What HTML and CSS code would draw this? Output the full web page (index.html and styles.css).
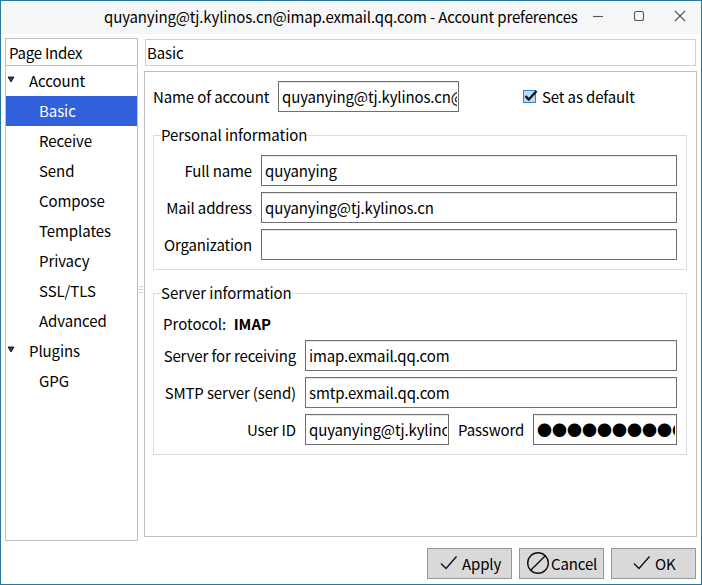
FILE: index.html
```
<!DOCTYPE html>
<html lang="en">
<head>
<meta charset="utf-8">
<title>Account preferences</title>
<link rel="stylesheet" href="styles.css">
</head>
<body>
<div class="window">
  <header class="titlebar">
    <span class="title">quyanying@tj.kylinos.cn@imap.exmail.qq.com - Account preferences</span>
    <div class="controls">
      <svg width="12" height="12" viewBox="0 0 12 12"><path d="M1 6.5h10"/></svg>
      <svg width="12" height="12" viewBox="0 0 12 12"><rect x="1.5" y="1.5" width="9" height="9" rx="2"/></svg>
      <svg width="12" height="12" viewBox="0 0 12 12"><path d="M1 1l10 10M11 1L1 11"/></svg>
    </div>
  </header>
  <div class="body">
    <nav class="sidebar">
      <div class="index-head">Page Index</div>
      <div class="row parent"><svg class="arrow" width="8" height="7" viewBox="0 0 8 7"><path d="M1 1h6L4 6z"/></svg>Account</div>
      <div class="row selected">Basic</div>
      <div class="row">Receive</div>
      <div class="row">Send</div>
      <div class="row">Compose</div>
      <div class="row">Templates</div>
      <div class="row">Privacy</div>
      <div class="row">SSL/TLS</div>
      <div class="row">Advanced</div>
      <div class="row parent"><svg class="arrow" width="8" height="7" viewBox="0 0 8 7"><path d="M1 1h6L4 6z"/></svg>Plugins</div>
      <div class="row">GPG</div>
    </nav>
    <div class="splitter"><i></i><i></i><i></i></div>
    <main class="main">
      <div class="page-head">Basic</div>
      <div class="panel">
        <div class="account">
          <label>Name of account</label>
          <div class="entry name-entry"><span>quyanying@tj.kylinos.cn@</span></div>
          <div class="default">
            <svg width="16" height="16" viewBox="0 0 16 16"><rect class="box" x="1.5" y="2.5" width="12" height="12"/><path class="tick" d="M3.500 8l3.200 3.600L14.600 3"/></svg>
            <span>Set as default</span>
          </div>
        </div>
        <section class="group personal">
          <h2>Personal information</h2>
          <div class="form">
            <label>Full name</label><div class="entry"><span>quyanying</span></div>
            <label>Mail address</label><div class="entry"><span>quyanying@tj.kylinos.cn</span></div>
            <label>Organization</label><div class="entry"></div>
          </div>
        </section>
        <section class="group server">
          <h2>Server information</h2>
          <div class="protocol">Protocol: <b>IMAP</b></div>
          <div class="form">
            <label>Server for receiving</label><div class="entry"><span>imap.exmail.qq.com</span></div>
            <label>SMTP server (send)</label><div class="entry"><span>smtp.exmail.qq.com</span></div>
            <label>User ID</label>
            <div class="login">
              <div class="entry"><span>quyanying@tj.kylino</span></div>
              <label>Password</label>
              <div class="entry"><span class="dots">●●●●●●●●●●</span></div>
            </div>
          </div>
        </section>
      </div>
    </main>
  </div>
  <footer class="actions">
    <div class="button apply"><svg width="18" height="16" viewBox="0 0 18 16"><path d="M1 8.500l5 5L16.500 1.500"/></svg>Apply</div>
    <div class="button cancel"><svg width="24" height="24" viewBox="0 0 24 24"><circle cx="12" cy="12" r="10.300"/><path d="M4.700 19.300L19.300 4.700"/></svg>Cancel</div>
    <div class="button ok"><svg width="18" height="16" viewBox="0 0 18 16"><path d="M1 8.500l5 5L16.500 1.500"/></svg>OK</div>
  </footer>
</div>
</body>
</html>
```
FILE: styles.css
```
* { box-sizing: border-box; }
body {
  margin: 0;
  font: 15px/30px "Noto Sans CJK SC", "Noto Sans", sans-serif;
  letter-spacing: -.13px;
  color: #000;
  background: #fff;
}
.window {
  width: 702px;
  height: 585px;
  border: 1px solid #28799a;
  background: #fff;
  overflow: hidden;
}
.titlebar {
  display: flex;
  height: 33px;
  padding-left: 103px;
  background: #f5f6f8;
  line-height: 32px;
  white-space: nowrap;
  letter-spacing: -.14px;
}
.title { width: 488px; }
.controls {
  display: flex;
  gap: 29px;
  padding-top: 9px;
}
.controls svg { fill: none; stroke: #555; stroke-width: 1.1; }
.body { display: flex; padding: 4px 4px 0; height: 507px; }
.sidebar {
  width: 133px;
  height: 503px;
  border: 1px solid #bfbfbf;
  letter-spacing: -.08px;
}
.index-head {
  height: 27px;
  padding-left: 3px;
  border-bottom: 1px solid #bfbfbf;
  line-height: 28px;
  letter-spacing: -.25px;
}
.row { height: 30px; padding-left: 33px; line-height: 30px; }
.row.parent { display: flex; align-items: flex-start; padding-left: 0; }
.arrow { width: 8px; margin: 10px 14px 0 1px; fill: #444; stroke: #000; stroke-width: .8; }
.row.selected { background: #3060dc; color: #fff; }
.splitter {
  display: flex;
  flex-direction: column;
  justify-content: center;
  align-items: center;
  gap: 2px;
  width: 6px;
}
.splitter i { width: 4px; height: 1px; background: #ccc; }
.main { width: 553px; }
.page-head {
  height: 27px;
  margin: 1px 1px 5px;
  padding-left: 1px;
  border: 1px solid #d0d0d0;
  line-height: 26px;
}
.panel {
  height: 466px;
  padding: 9px 9px 0 8px;
  border: 1px solid #bfbfbf;
}
.account { display: flex; height: 31px; line-height: 32px; }
.account label { width: 125px; }
.entry {
  height: 31px;
  padding: 0 1px 0 3px;
  border: 1px solid #707070;
  box-shadow: inset 0 1px #e8e8e8;
  white-space: nowrap;
  line-height: 30px;
}
.entry span { display: block; overflow: hidden; height: 29px; }
.name-entry { width: 181px; }
.default { display: flex; margin-left: 63px; }
.default svg { margin: 7px 4px 0 0; }
.box { fill: #bcdcf5; stroke: #3483c4; }
.tick { fill: none; stroke: #111; stroke-width: 2.3; }
.group {
  border: 1px solid #dcdcdc;
  width: 534px;
}
.group h2 {
  width: max-content;
  height: 20px;
  margin: -11px 0 0 7px;
  background: #fff;
  font: inherit;
  line-height: 20px;
  letter-spacing: -.06px;
}
.personal { height: 135px; margin-top: 23px; }
.server { height: 162px; margin-top: 23px; }
.form {
  display: grid;
  row-gap: 6px;
  padding: 10px 9px 0 0;
}
.form > label { padding-right: 9px; text-align: right; white-space: nowrap; }
.form label { height: 31px; line-height: 32px; }
.personal .form { grid-template-columns: 107px 1fr; }
.server .form { grid-template-columns: 151px 1fr; padding-top: 0; }
.protocol { height: 37px; padding: 7px 0 0 9px; line-height: 28px; letter-spacing: 0; }
.protocol b { margin-left: 4px; }
.login { display: grid; grid-template-columns: 144px 84px 144px; }
.login label { padding-left: 9px; }
.entry .dots { letter-spacing: 0; }
.actions {
  display: flex;
  justify-content: flex-end;
  gap: 7px;
  padding: 7px 5px 0 0;
}
.button {
  display: flex;
  align-items: center;
  width: 85px;
  height: 31px;
  border: 1px solid #979797;
  background: #d9d9d9;
  line-height: 31px;
}
.button svg { flex: none; margin-top: -1px; fill: none; stroke: #111; stroke-width: 1.4; }
.apply { padding-left: 12px; }
.apply svg, .ok svg { margin-right: 4px; }
.cancel { padding-left: 6px; }
.cancel svg { margin-right: 1px; }
.ok { padding-left: 21px; }
```
